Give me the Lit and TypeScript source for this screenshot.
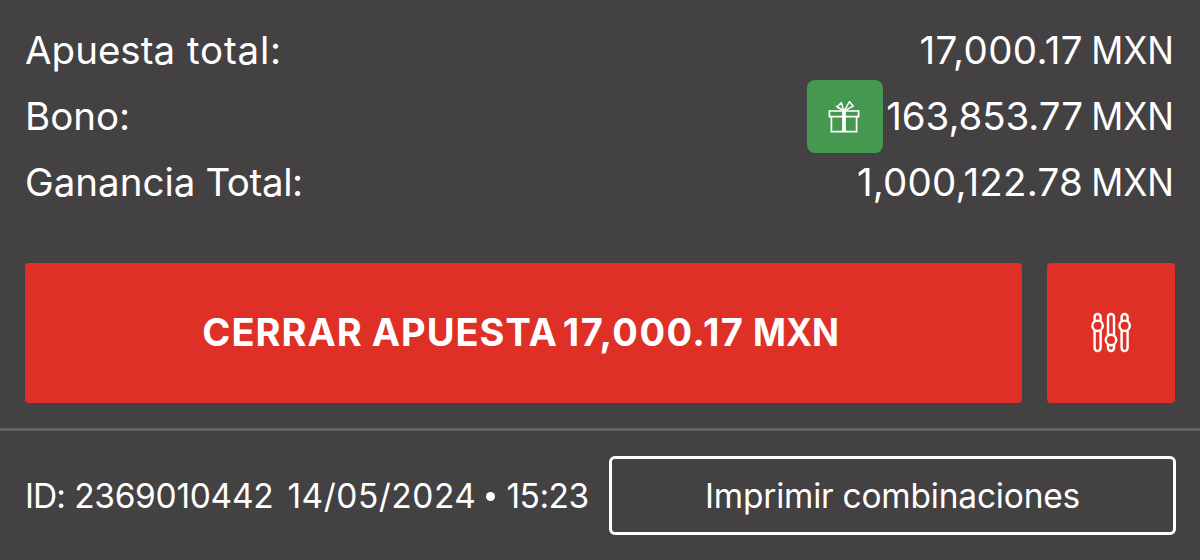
import { LitElement, html, css } from 'lit'
import { customElement, property } from 'lit/decorators.js'

@customElement('gift-badge')
export class GiftBadge extends LitElement {
	static styles = css`
		:host {
			display: flex;
			align-items: center;
			justify-content: center;
			flex: none;
			box-sizing: border-box;
			width: 76px;
			height: 73px;
			padding: 1px 2px 0 0;
			border-radius: 8px;
			background: #45984f;
		}
		svg {
			display: block;
		}
	`

	render() {
		return html`
			<svg width="32" height="34" viewBox="0 0 32 34" fill="none" stroke="#fff" stroke-width="1.7">
				<path d="M1.4 11h29.2v5.6H1.4zM3.4 16.6h25.2v15H3.4z" />
				<path d="M16 11v20.6" stroke-width="3.8" />
				<path d="M15.6 10.8 13.4 2.6 9.2 7zM16.2 10.8 21.4 1.6 25.2 6.2zM16 10.8 8 6.2" stroke-width="1.5" stroke-linejoin="round" />
			</svg>
		`
	}
}

@customElement('summary-row')
export class SummaryRow extends LitElement {
	@property() amount = ''
	@property() currency = 'MXN'
	@property({ type: Boolean }) bonus = false

	static styles = css`
		:host {
			display: flex;
			align-items: center;
			justify-content: space-between;
			height: 66px;
			font-size: 38.5px;
		}
		.label {
			display: flex;
			gap: 12px;
		}
		.value {
			display: flex;
			align-items: center;
		}
		gift-badge {
			margin-right: 3px;
		}
		.amount {
			margin-right: 1px;
			letter-spacing: var(--amount-tracking, -0.1px);
		}
		.currency {
			transform: scaleX(0.92);
			transform-origin: right;
		}
	`

	render() {
		return html`
			<span class="label"><slot></slot></span>
			<span class="value">
				${this.bonus ? html`<gift-badge></gift-badge>` : ''}
				<span class="amount">${this.amount}</span>
				<span class="currency">${this.currency}</span>
			</span>
		`
	}
}

@customElement('app-root')
export class AppRoot extends LitElement {
	static styles = css`
		:host {
			display: flex;
			flex-direction: column;
			box-sizing: border-box;
			height: 560px;
			overflow: hidden;
			background: #444142;
			color: #fff;
			font-family: Inter, Roboto, sans-serif;
			white-space: nowrap;
		}
		.summary {
			padding: 17px 26px 0 25px;
		}
		.stake {
			--amount-tracking: 0.4px;
		}
		.winnings {
			--amount-tracking: 0.2px;
		}
		.wide {
			letter-spacing: 0.8px;
		}
		.tight {
			margin-left: -2px;
			letter-spacing: -0.4px;
		}
		.actions {
			display: grid;
			grid-template-columns: 1fr 128px;
			gap: 25px;
			height: 140px;
			padding: 0 25px;
			margin-top: 48px;
		}
		button {
			display: flex;
			align-items: center;
			justify-content: center;
			padding: 0;
			border: 0;
			border-radius: 4px;
			background: #df3027;
			color: inherit;
			font: inherit;
		}
		.cashout {
			gap: 9px;
			padding: 0 8px 2px 0;
			font-size: 38px;
			font-weight: 700;
			letter-spacing: 1px;
		}
		.cashout .sum {
			margin-left: -4px;
			letter-spacing: 1.4px;
		}
		.cashout .currency {
			margin-right: -9px;
			letter-spacing: 0;
			transform: scaleX(0.93);
			transform-origin: left;
		}
		.footer {
			display: flex;
			align-items: center;
			justify-content: space-between;
			margin-top: 25px;
			padding: 25px 24px 25px 25px;
			border-top: 3px solid #656364;
			font-size: 33.5px;
		}
		.meta {
			display: flex;
			align-items: center;
		}
		.tag {
			margin-right: 9px;
			letter-spacing: -0.9px;
		}
		.number {
			margin-right: 14px;
			letter-spacing: -0.3px;
		}
		.date {
			letter-spacing: 0.5px;
		}
		.dot {
			width: 9px;
			height: 9px;
			margin: 2px 11px 0 10px;
			border-radius: 50%;
			background: currentColor;
		}
		.time {
			letter-spacing: -0.5px;
		}
		.print {
			gap: 9px;
			width: 567px;
			height: 79px;
			box-sizing: border-box;
			border: 3px solid #fff;
			border-radius: 6px;
			background: none;
			letter-spacing: -0.2px;
		}
	`

	render() {
		return html`
			<div class="summary">
				<summary-row class="stake" amount="17,000.17"><span>Apuesta</span><span class="wide">total:</span></summary-row>
				<summary-row amount="163,853.77" bonus>Bono:</summary-row>
				<summary-row class="winnings" amount="1,000,122.78"><span>Ganancia</span><span class="tight">Total:</span></summary-row>
			</div>
			<div class="actions">
				<button class="cashout">
					<span>CERRAR</span>
					<span>APUESTA</span>
					<span class="sum">17,000.17</span>
					<span class="currency">MXN</span>
				</button>
				<button class="settings">
					<svg width="40" height="42" viewBox="0 0 40 42" fill="none" stroke="#fff" stroke-width="2.4">
						<path d="M3.6 9.4V5a3 3 0 0 1 6 0v4.4M3.6 18.4V36a3 3 0 0 0 6 0V18.4" />
						<circle cx="6.6" cy="13.8" r="5.2" />
						<path d="M17 23.4V5a3 3 0 0 1 6 0v18.4M17 32.6V36a3 3 0 0 0 6 0v-3.4" />
						<circle cx="20" cy="28" r="5.2" />
						<path d="M30.6 9.4V5a3 3 0 0 1 6 0v4.4M30.6 18.4V36a3 3 0 0 0 6 0V18.4" />
						<circle cx="33.6" cy="13.8" r="5.2" />
					</svg>
				</button>
			</div>
			<div class="footer">
				<div class="meta">
					<span class="tag">ID:</span>
					<span class="number">2369010442</span>
					<span class="date">14/05/2024</span>
					<span class="dot"></span>
					<span class="time">15:23</span>
				</div>
				<button class="print">
					<span>Imprimir</span>
					<span>combinaciones</span>
				</button>
			</div>
		`
	}
}
